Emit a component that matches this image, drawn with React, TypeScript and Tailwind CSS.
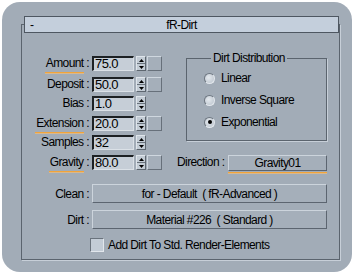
const FONT = "font-['Liberation_Sans',Arial,sans-serif]"

interface SpinRowProps {
    label: string
    value: string
    underline?: boolean
    square?: boolean
    className?: string
}

function Spinner() {
    return (
        <div className="w-[10px] h-[15px] flex flex-col bg-[#c3ccd5] border-t border-l border-[#dfe5eb] border-r border-b border-r-[#5d666f] border-b-[#5d666f]">
            <div className="flex-1 flex items-center justify-center border-b border-[#6b747d]">
                <svg width="5" height="3" viewBox="0 0 5 3"><path d="M2.5 0 L5 3 L0 3 Z" fill="#000" /></svg>
            </div>
            <div className="flex-1 flex items-center justify-center">
                <svg width="5" height="3" viewBox="0 0 5 3"><path d="M0 0 L5 0 L2.5 3 Z" fill="#000" /></svg>
            </div>
        </div>
    )
}

function Label({ text, underline }: { text: string; underline?: boolean }) {
    return (
        <div className="w-[67px] h-[18px] shrink-0 flex justify-end items-start leading-[15px] whitespace-pre">
            <div className={underline ? 'h-[17px] border-b border-[#f2a43a] shadow-[0_1px_0_#d9b88c] pl-px' : ''}>{text}</div>
            <div>{' :'}</div>
        </div>
    )
}

function SpinRow({ label, value, underline, square = true, className = '' }: SpinRowProps) {
    return (
        <div className={`flex items-start h-[15px] ${className}`}>
            <Label text={label} underline={underline} />
            <div className="ml-[3px] w-[42px] h-[15px] bg-[#c6ced7] border-t-2 border-l-2 border-[#1d2124] border-r border-b border-r-[#dbe1e7] border-b-[#dbe1e7] pl-[1px] leading-[12px] text-[13px]">
                {value}
            </div>
            <div className="ml-[2px]">
                <Spinner />
            </div>
            {square && (
                <div className="ml-px w-[15px] h-[15px] bg-[#a5afba] border-t border-l border-[#cfd7df] border-r border-b border-r-[#67707a] border-b-[#67707a]" />
            )}
        </div>
    )
}

function Radio({ label, checked }: { label: string; checked?: boolean }) {
    return (
        <div className="flex items-center h-[14px]">
            <div className="w-[11px] h-[11px] rounded-full bg-[radial-gradient(circle_at_40%_40%,#e4e9ee,#b8c1ca)] border border-t-[#6f7882] border-l-[#6f7882] border-r-[#e3e8ed] border-b-[#e3e8ed] flex items-center justify-center">
                {checked && <div className="w-[4px] h-[4px] rounded-full bg-black" />}
            </div>
            <span className="ml-[6px]">{label}</span>
        </div>
    )
}

function WideButton({ text }: { text: string }) {
    return (
        <div className="w-[235px] h-[19px] bg-[#a5afba] border-t border-l border-[#ccd4dc] border-r border-b border-r-[#5c6570] border-b-[#5c6570] flex items-center justify-center whitespace-pre">
            {text}
        </div>
    )
}

export default function App() {
    return (
        <div className={`w-[355px] h-[275px] bg-white p-[2px] text-[12px] tracking-[-0.6px] text-black ${FONT}`}>
            <div className="w-[350px] h-[270px] rounded-[18px] bg-[#a2acb7] pt-[22px] pl-[19px]">
                {/* Rollout frame */}
                <div className="w-[319px] h-[236px] border border-[#5b646e] shadow-[1px_1px_0_#c7cfd8] flex flex-col">
                    {/* Title bar */}
                    <div className="-mt-[9px] ml-[2px] h-[17px] border border-[#4e5761] bg-[#c4cfdc] flex items-center leading-none">
                        <span className="w-[20px] pl-[5px]">-</span>
                        <span className="flex-1 text-center">fR-Dirt</span>
                        <span className="w-[20px]" />
                    </div>

                    {/* Spinners + distribution */}
                    <div className="mt-[18px] flex items-start">
                        <div className="mt-[5px] flex flex-col">
                            <SpinRow label="Amount" value="75.0" underline />
                            <SpinRow label="Deposit" value="50.0" className="mt-[6px]" />
                            <SpinRow label="Bias" value="1.0" square={false} className="mt-[4px]" />
                            <SpinRow label="Extension" value="20.0" underline className="mt-[5px]" />
                            <SpinRow label="Samples" value="32" square={false} className="mt-[4px]" />
                        </div>
                        <fieldset className="ml-[24px] w-[141px] h-[90px] border border-[#5b646e] shadow-[1px_1px_0_#c7cfd8] pl-[17px]">
                            <legend className="ml-[7px] px-[2px] leading-[14px]">Dirt Distribution</legend>
                            <div className="mt-[6px] flex flex-col gap-[8px]">
                                <Radio label="Linear" />
                                <Radio label="Inverse Square" />
                                <Radio label="Exponential" checked />
                            </div>
                        </fieldset>
                    </div>

                    {/* Gravity + direction */}
                    <div className="mt-[5px] h-[19px] flex items-start">
                        <SpinRow label="Gravity" value="80.0" underline />
                        <span className="ml-[15px] w-[47px] leading-[15px] whitespace-pre">Direction :</span>
                        <div className="ml-[4px] border-b border-[#f2a43a] shadow-[0_1px_0_#d9b88c] pb-px">
                            <div className="w-[99px] h-[16px] bg-[#a5afba] border-t border-l border-[#ccd4dc] border-r border-b border-r-[#5c6570] border-b-[#5c6570] flex items-center justify-center">
                                Gravity01
                            </div>
                        </div>
                    </div>

                    {/* Clean / Dirt materials */}
                    <div className="mt-[10px] flex items-center">
                        <div className="w-[67px] text-right">Clean :</div>
                        <div className="ml-[3px]">
                            <WideButton text="for - Default  ( fR-Advanced )" />
                        </div>
                    </div>
                    <div className="mt-[7px] flex items-center">
                        <div className="w-[67px] text-right">Dirt :</div>
                        <div className="ml-[3px]">
                            <WideButton text="Material #226  ( Standard )" />
                        </div>
                    </div>

                    {/* Checkbox */}
                    <div className="mt-[9px] ml-[68px] flex items-center h-[14px]">
                        <div className="w-[14px] h-[14px] bg-[#c3ccd6] border-t border-l border-[#6a737d] border-r border-b border-r-[#e2e7ec] border-b-[#e2e7ec]" />
                        <span className="ml-[4px]">Add Dirt To Std. Render-Elements</span>
                    </div>
                </div>
            </div>
        </div>
    )
}
